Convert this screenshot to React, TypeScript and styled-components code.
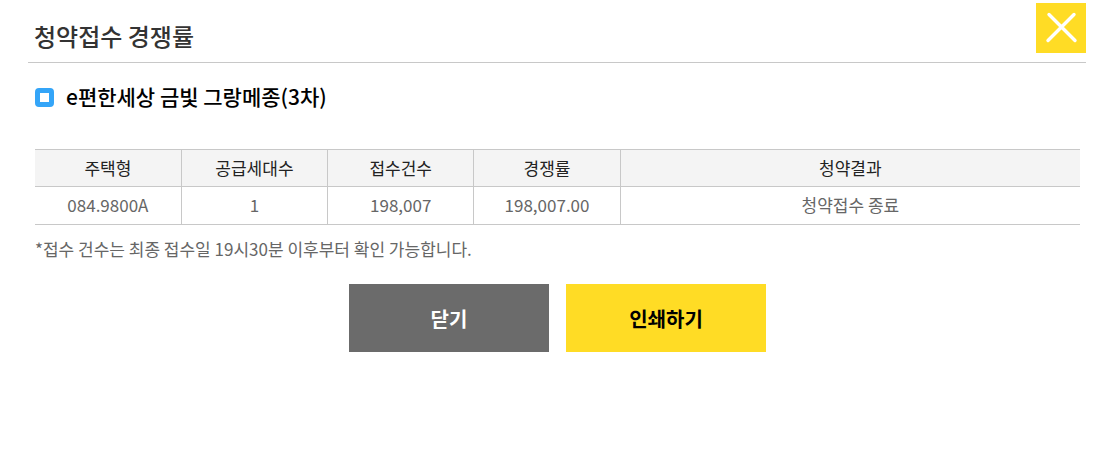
import React from "react";
import styled, { createGlobalStyle } from "styled-components";

const GlobalStyle = createGlobalStyle`
  * { box-sizing: border-box; }
  body {
    margin: 0;
    background: #fff;
    color: #666;
    font-family: "Noto Sans CJK KR", sans-serif;
    font-size: 17px;
  }
`;

const Popup = styled.main`
  padding: 3px 20px 20px 28px;
`;

const Header = styled.header`
  display: flex;
  justify-content: space-between;
  height: 60px;
  border-bottom: 1px solid #c8c8c8;
`;

const Title = styled.h1`
  margin: 0;
  padding: 13px 0 0 6px;
  color: #333;
  font-size: 24px;
  font-weight: 500;
  line-height: 40px;
`;

const CloseIconButton = styled.button`
  width: 50px;
  height: 50px;
  padding: 0;
  border: 0;
  background: #ffdc25;
  cursor: pointer;

  svg { display: block; }
`;

const Content = styled.section`
  padding: 18px 6px 0 7px;
`;

const ComplexName = styled.h2`
  display: flex;
  align-items: center;
  gap: 12px;
  margin: 0 0 37px;
  color: #000;
  font-size: 21px;
  font-weight: 500;
  line-height: 31px;
`;

const Bullet = styled.span`
  width: 19px;
  height: 19px;
  margin-top: 2px;
  border: 5px solid #34a5f8;
  border-radius: 4px;
`;

const RateTable = styled.table`
  width: 100%;
  border-collapse: collapse;
  table-layout: fixed;
  border-top: 1px solid #c8c8c8;
`;

const Cell = styled.td`
  height: 38px;
  padding: 0 0 2px;
  border-bottom: 1px solid #c8c8c8;
  text-align: center;
  line-height: 24px;

  & + & { border-left: 1px solid #c8c8c8; }
`;

const HeadCell = styled(Cell)`
  height: 37px;
  padding: 0;
  background: #f4f4f4;
  color: #222;
  font-weight: 400;
`;

const Note = styled.p`
  margin: 11px 0 22px;
  line-height: 26px;
`;

const Actions = styled.div`
  display: flex;
  justify-content: center;
  gap: 17px;
`;

const ActionButton = styled.button<{ $primary?: boolean }>`
  width: 200px;
  height: 68px;
  padding: 0;
  border: 0;
  background: ${(p) => (p.$primary ? "#ffdc25" : "#6b6b6b")};
  color: ${(p) => (p.$primary ? "#000" : "#fff")};
  font: 700 20px "Noto Sans CJK KR", sans-serif;
  cursor: pointer;
`;

const columns = ["주택형", "공급세대수", "접수건수", "경쟁률", "청약결과"];
const rows = [["084.9800A", "1", "198,007", "198,007.00", "청약접수 종료"]];

export default function App() {
  return (
    <Popup>
      <GlobalStyle />
      <Header>
        <Title>청약접수 경쟁률</Title>
        <CloseIconButton type="button" aria-label="닫기">
          <svg width="50" height="50" viewBox="0 0 50 50" fill="none" stroke="#fff" strokeWidth="3.4" strokeLinecap="round">
            <path d="M13 11.5L39 37.5M38 11.5L12 37.5" />
          </svg>
        </CloseIconButton>
      </Header>
      <Content>
        <ComplexName>
          <Bullet />
          e편한세상 금빛 그랑메종(3차)
        </ComplexName>
        <RateTable>
          <colgroup>
            <col width="14%" />
            <col width="14%" />
            <col width="14%" />
            <col width="14%" />
            <col />
          </colgroup>
          <thead>
            <tr>
              {columns.map((c) => (
                <HeadCell as="th" scope="col" key={c}>{c}</HeadCell>
              ))}
            </tr>
          </thead>
          <tbody>
            {rows.map((r) => (
              <tr key={r[0]}>
                {r.map((v, i) => (
                  <Cell key={i}>{v}</Cell>
                ))}
              </tr>
            ))}
          </tbody>
        </RateTable>
        <Note>*접수 건수는 최종 접수일 19시30분 이후부터 확인 가능합니다.</Note>
        <Actions>
          <ActionButton type="button">닫기</ActionButton>
          <ActionButton type="button" $primary>인쇄하기</ActionButton>
        </Actions>
      </Content>
    </Popup>
  );
}
